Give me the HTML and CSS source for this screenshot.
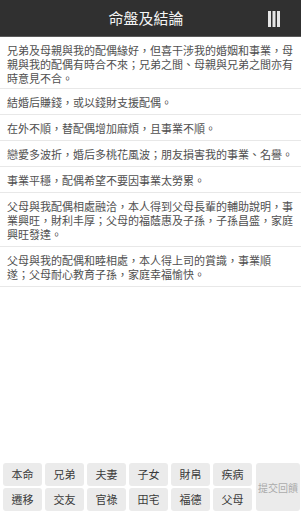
FILE: index.html
```html
<!DOCTYPE html>
<html lang="zh-Hant">
<head>
<meta charset="utf-8">
<title>命盤及結論</title>
<link rel="stylesheet" href="styles.css">
</head>
<body>
<div class="app">
  <header class="topbar">
    <div class="title">命盤及結論</div>
    <svg class="menu" width="12" height="16" viewBox="0 0 12 16">
      <rect x="0" y="0" width="3" height="16" fill="#e6e6e6"/>
      <rect x="4.5" y="0" width="3" height="16" fill="#e6e6e6"/>
      <rect x="9" y="0" width="3" height="16" fill="#e6e6e6"/>
    </svg>
  </header>
  <main class="list">
    <div class="item">兄弟及母親與我的配偶緣好，但喜干涉我的婚姻和事業，母親與我的配偶有時合不來；兄弟之間、母親與兄弟之間亦有時意見不合。</div>
    <div class="item">結婚后賺錢，或以錢財支援配偶。</div>
    <div class="item">在外不順，替配偶增加麻煩，且事業不順。</div>
    <div class="item">戀愛多波折，婚后多桃花風波；朋友損害我的事業、名譽。</div>
    <div class="item">事業平穩，配偶希望不要因事業太勞累。</div>
    <div class="item">父母與我配偶相處融洽，本人得到父母長輩的輔助說明，事業興旺，財利丰厚；父母的福蔭惠及子孫，子孫昌盛，家庭興旺發達。</div>
    <div class="item item-narrow">父母與我的配偶和睦相處，本人得上司的賞識，事業順遂；父母耐心教育子孫，家庭幸福愉快。</div>
  </main>
  <nav class="tabs">
    <button class="tab">本命</button>
    <button class="tab">兄弟</button>
    <button class="tab">夫妻</button>
    <button class="tab">子女</button>
    <button class="tab">財帛</button>
    <button class="tab">疾病</button>
    <button class="tab feedback">提交回饋</button>
    <button class="tab">遷移</button>
    <button class="tab">交友</button>
    <button class="tab">官祿</button>
    <button class="tab">田宅</button>
    <button class="tab">福德</button>
    <button class="tab">父母</button>
  </nav>
</div>
</body>
</html>
```
FILE: styles.css
```css
* { box-sizing: border-box; }
html, body { margin: 0; padding: 0; background: #fff; }
body {
  font-family: "Noto Sans CJK TC", "Noto Sans CJK SC", "Noto Sans", sans-serif;
  color: #333;
}
.app {
  height: 512px;
  display: flex;
  flex-direction: column;
}
.topbar {
  height: 37px;
  background: #303030;
  border-bottom: 1px solid #5a5a5a;
  display: flex;
  align-items: center;
  flex: none;
}
.title {
  flex: 1;
  text-align: center;
  padding-left: 24px;
  color: #f4f4f4;
  font-size: 15px;
  line-height: 20px;
  font-weight: 400;
}
.menu {
  margin-right: 21px;
  margin-top: 1px;
}
.list {
  flex: 1;
}
.item {
  font-size: 11px;
  line-height: 14px;
  padding: 6px 7px 5px;
  border-bottom: 1px solid #e8e8e8;
  color: #505050;
}
.item:first-child {
  padding-bottom: 3px;
}
.item-narrow {
  padding-right: 16px;
}
.tabs {
  flex: none;
  display: grid;
  grid-template-columns: repeat(6, 39px) 1fr;
  grid-template-rows: 23px 23px;
  gap: 2px 3px;
  padding: 0 1px 1px 3px;
}
.tab {
  border: none;
  margin: 0;
  padding: 0;
  background: #ebebeb;
  border-radius: 3px;
  font-family: inherit;
  font-size: 11px;
  color: #3a3a3a;
  line-height: 23px;
  white-space: nowrap;
}
.feedback {
  grid-column: 7;
  grid-row: 1 / span 2;
  color: #ababab;
  font-size: 10px;
  margin-left: 1px;
}
```
